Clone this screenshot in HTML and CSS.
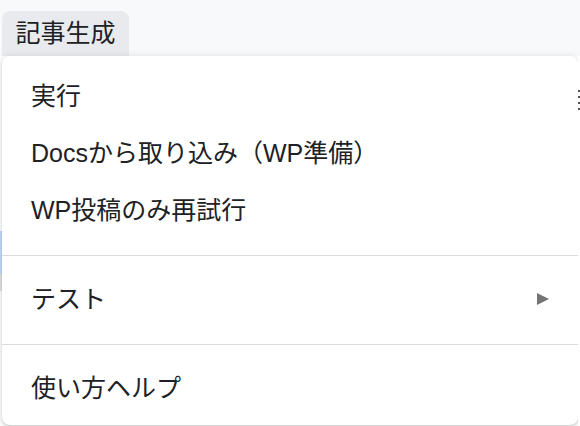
FILE: index.html
```html
<!DOCTYPE html>
<html lang="ja">
<head>
<meta charset="utf-8">
<link rel="stylesheet" href="styles.css">
</head>
<body>
<div class="page">
  <div class="menubar">
    <div class="menu-button">記事生成</div>
  </div>
  <div class="sheet">
    <div class="edge edge-left"></div>
    <div class="menu">
      <div class="item">実行</div>
      <div class="item">Docsから取り込み（WP準備）</div>
      <div class="item">WP投稿のみ再試行</div>
      <div class="sep"></div>
      <div class="item has-sub"><span>テスト</span><span class="arrow"></span></div>
      <div class="sep"></div>
      <div class="item">使い方ヘルプ</div>
    </div>
    <div class="edge edge-right"></div>
  </div>
</div>
</body>
</html>
```

FILE: styles.css
```css
html, body {
  margin: 0;
  padding: 0;
}
body {
  width: 580px;
  height: 426px;
  overflow: hidden;
  background: #f8f9fa;
  font-family: "Liberation Sans", "Noto Sans CJK JP", sans-serif;
  color: #202124;
}
.page {
  display: flex;
  flex-direction: column;
}
.menubar {
  height: 56px;
  display: flex;
  align-items: flex-end;
  padding-left: 2px;
}
.menu-button {
  height: 45px;
  width: 127px;
  box-sizing: border-box;
  background: #e8eaed;
  border-radius: 8px 8px 0 0;
  font-size: 25px;
  display: flex;
  align-items: center;
  justify-content: center;
  padding-bottom: 5px;
}
.sheet {
  display: flex;
  background: #ffffff;
  height: 370px;
}
.edge {
  width: 2px;
  flex: none;
}
.edge-left {
  background: linear-gradient(to bottom, #ffffff 0, #ffffff 175px, #c6dafc 175px, #c6dafc 218px, #e0e0e0 218px, #e0e0e0 235px, #ffffff 235px);
}
.edge-right {
  background: linear-gradient(to bottom, #ffffff 0, #ffffff 34px, #555 34px, #555 36px, #fff 36px, #fff 40px, #555 40px, #555 42px, #fff 42px, #fff 46px, #555 46px, #555 48px, #fff 48px, #fff 52px, #555 52px, #555 54px, #fff 54px);
}
.menu {
  flex: 1;
  background: #ffffff;
  border-radius: 8px;
  box-shadow: 0 2px 6px 2px rgba(60, 64, 67, 0.12), 0 1px 2px rgba(60, 64, 67, 0.2);
  padding: 12px 0 8px;
  height: 369px;
  box-sizing: border-box;
}
.item {
  height: 57px;
  box-sizing: border-box;
  display: flex;
  align-items: center;
  justify-content: space-between;
  padding: 0 29px 6px;
  font-size: 25px;
  white-space: nowrap;
}
.sep {
  height: 1px;
  background: #dadce0;
  margin: 16px 0 15px;
}
.arrow {
  width: 0;
  height: 0;
  border-left: 12px solid #757575;
  border-top: 6.5px solid transparent;
  border-bottom: 6.5px solid transparent;
  margin-top: 5px;
}
```
